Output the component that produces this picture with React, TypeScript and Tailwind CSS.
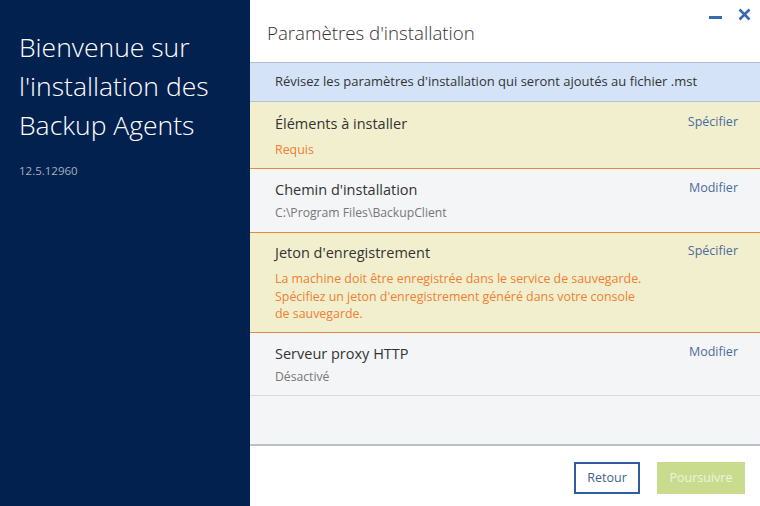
import React from 'react';

const font = { fontFamily: '"Open Sans", "Noto Sans", sans-serif' };

type Row = {
  title: string;
  action: string;
  warn: boolean;
  lines: string[];
  pad: string;
  border: string;
};

const rows: Row[] = [
  {
    title: 'Éléments à installer',
    action: 'Spécifier',
    warn: true,
    lines: ['Requis'],
    pad: 'pt-[12px] pb-[9.5px]',
    border: 'border-[#e38a3f]',
  },
  {
    title: "Chemin d'installation",
    action: 'Modifier',
    warn: false,
    lines: ['C:\\Program Files\\BackupClient'],
    pad: 'pt-[11px] pb-[11px]',
    border: 'border-[#e38a3f]',
  },
  {
    title: "Jeton d'enregistrement",
    action: 'Spécifier',
    warn: true,
    lines: [
      'La machine doit être enregistrée dans le service de sauvegarde.',
      "Spécifiez un jeton d'enregistrement généré dans votre console",
      'de sauvegarde.',
    ],
    pad: 'pt-[10px] pb-[9.5px]',
    border: 'border-[#e38a3f]',
  },
  {
    title: 'Serveur proxy HTTP',
    action: 'Modifier',
    warn: false,
    lines: ['Désactivé'],
    pad: 'pt-[11px] pb-[10px]',
    border: 'border-[#d6dadf]',
  },
];

function SettingRow({ row }: { row: Row }) {
  return (
    <div
      className={`flex border-b pl-[25px] pr-[22px] ${row.pad} ${row.border} ${
        row.warn ? 'bg-[#f2efcf]' : 'bg-[#f4f5f7]'
      }`}
    >
      <div className="flex-1">
        <div className="text-[14.5px] leading-[20px] text-[#333333]">{row.title}</div>
        {row.warn ? (
          <div className="mt-[7px] text-[12.4px] leading-[17.5px] text-[#ef7f32]">
            {row.lines.map((l) => (
              <div key={l}>{l}</div>
            ))}
          </div>
        ) : (
          <div className="mt-[5px] text-[12.2px] leading-[16px] text-[#777777]">{row.lines[0]}</div>
        )}
      </div>
      <div className="text-[12.5px] leading-[16px] text-[#4c6c9c]">{row.action}</div>
    </div>
  );
}

export default function App() {
  return (
    <div className="flex w-[760px] h-[506px] overflow-hidden bg-white" style={font}>
      {/* panneau gauche */}
      <aside className="w-[250px] shrink-0 bg-[#03214f] pl-[19px] pt-[28px]">
        <h1 className="text-[26.5px] leading-[39px] font-light text-white">
          Bienvenue sur
          <br />
          l'installation des
          <br />
          Backup Agents
        </h1>
        <div className="mt-[18px] text-[11.5px] leading-[16px] text-[#a3afc2]">12.5.12960</div>
      </aside>

      {/* contenu */}
      <main className="flex-1 flex flex-col">
        <header className="relative h-[63px] shrink-0 pl-[17px] pt-[19px] border-b border-[#b0c0d4]">
          <h2 className="text-[18.7px] leading-[28px] font-light text-[#333333]">Paramètres d'installation</h2>
          <div className="absolute top-[8px] right-[9px] flex items-center gap-[16px]">
            <svg width="13" height="13" viewBox="0 0 13 13">
              <rect x="0" y="8" width="13" height="3" fill="#3a6aae" />
            </svg>
            <svg width="13" height="13" viewBox="0 0 13 13">
              <path d="M1.5 1.5 L11.5 11.5 M11.5 1.5 L1.5 11.5" stroke="#3a6aae" strokeWidth="2.6" />
            </svg>
          </div>
        </header>

        <div className="h-[39px] shrink-0 flex items-center pl-[25px] bg-[#d4e3f8] border-b border-[#b8c3cd] text-[13px] text-[#333333]">
          Révisez les paramètres d'installation qui seront ajoutés au fichier .mst
        </div>

        {rows.map((r) => (
          <SettingRow key={r.title} row={r} />
        ))}

        <div className="flex-1 bg-[#f4f5f7] border-b-2 border-[#b9c2cc]" />

        <footer className="h-[60px] shrink-0 flex items-start justify-end gap-[17px] pt-[16px] pr-[15px]">
          <button className="w-[66px] h-[32px] border-2 border-[#2d5d9f] bg-white text-[12.5px] text-[#3f5f8f]">
            Retour
          </button>
          <button className="w-[88px] h-[32px] bg-[#c9dc8e] text-[12.5px] text-[#eef4dc]">Poursuivre</button>
        </footer>
      </main>
    </div>
  );
}
